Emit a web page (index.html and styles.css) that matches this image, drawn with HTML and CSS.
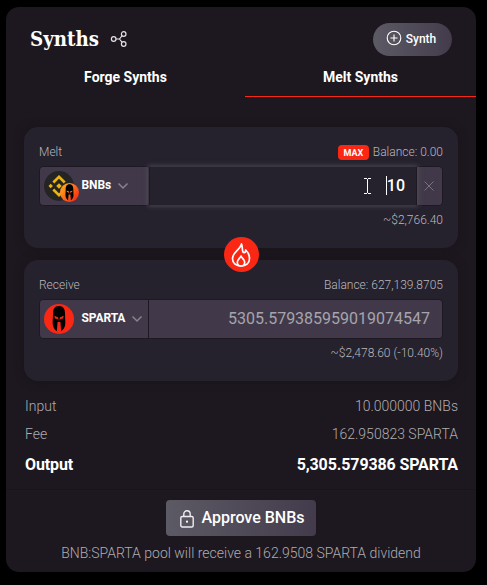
FILE: index.html
```html
<!DOCTYPE html>
<html lang="en">
<head>
<meta charset="utf-8">
<title>Synths</title>
<link rel="stylesheet" href="styles.css">
</head>
<body>
<svg class="defs" width="0" height="0">
  <defs>
    <linearGradient id="flame" x1="0" y1="0" x2="1" y2="1"><stop offset="0.15" stop-color="#ffa21c"/><stop offset="0.9" stop-color="#fb2715"/></linearGradient>
    <symbol id="helmet" viewBox="0 0 30 30">
      <path fill-rule="evenodd" d="M15 2C10.400 2 9 5.500 9 9.500c0 4.500-.6 8-.2 11.500.4 2.600 2 4.700 4 6.200L13.600 18h2.800l.8 9.200c2-1.500 3.600-3.600 4-6.200.4-3.500-.2-7-.2-11.500C21 5.500 19.600 2 15 2zM10.300 11.800l4 1.700v3.500l-.8-1.900-2.500-.7zM19.700 11.800l-4 1.700v3.500l.8-1.900 2.500-.7z" fill="#000"/>
    </symbol>
  </defs>
</svg>
<main class="card">
  <header class="head">
    <h1 class="title">Synths</h1>
    <svg class="share" width="18" height="18" viewBox="0 0 18 18"><g fill="none" stroke="#e4e3e6" stroke-width="1.200"><circle cx="3.700" cy="9" r="2.300"/><circle cx="13.700" cy="4" r="2.300"/><circle cx="13.700" cy="14" r="2.300"/><path d="M6 9h3.500l2.600-3.300M9.500 9l2.600 3.300"/></g></svg>
    <button class="synth"><svg width="16" height="16" viewBox="0 0 16 16"><g fill="none" stroke="#fff" stroke-width="1.100"><circle cx="8" cy="8" r="6.800"/><path d="M8 4.500v7M4.500 8h7"/></g></svg><span>Synth</span></button>
  </header>
  <nav class="tabs"><a class="tab">Forge Synths</a><a class="tab active">Melt Synths</a></nav>
  <div class="body">
    <section class="panel">
      <div class="row"><span>Melt</span><span class="balance"><b class="max">MAX</b>Balance: 0.00</span></div>
      <div class="field">
        <div class="asset">
          <div class="coin">
            <svg width="30" height="30" viewBox="0 0 30 30"><circle cx="15" cy="15" r="15" fill="#242425"/><g fill="none" stroke="#edb50b" stroke-width="2.600"><path d="M9.300 11.500L15 5.800l5.700 5.700M9.300 18.500l5.700 5.700 5.700-5.700"/></g><g fill="#edb50b"><path d="M15 12.200l2.800 2.800-2.800 2.800-2.800-2.800zM6.700 12.800l2.200 2.200-2.200 2.200L4.500 15zM23.300 12.800l2.200 2.200-2.200 2.200-2.200-2.200z"/></g></svg>
            <svg class="mini" width="19" height="19" viewBox="0 0 30 30"><circle cx="15" cy="15" r="15" fill="url(#flame)"/><use href="#helmet"/></svg>
          </div>
          <b>BNBs</b>
          <svg class="chev" width="12" height="8" viewBox="0 0 12 8"><path d="M1.500 1.500L6 6l4.500-4.500" fill="none" stroke="#87858c" stroke-width="1.500"/></svg>
        </div>
        <div class="amount focus">
          <svg class="ibeam" width="7" height="16" viewBox="0 0 7 16"><path d="M0 .5h3M4 .5h3M0 15.500h3M4 15.500h3M3.500 1v14" fill="none" stroke="#fff"/></svg>
          <i class="caret"></i><span>10</span>
        </div>
        <div class="clear"><svg width="10" height="10" viewBox="0 0 10 10"><path d="M.5.5l9 9M9.500.5l-9 9" fill="none" stroke="#77737f"/></svg></div>
      </div>
      <div class="usd">~$2,766.40</div>
    </section>
    <div class="burn"><svg width="20" height="26" viewBox="0 0 20 26"><g fill="none" stroke="#fff" stroke-width="1.700" stroke-linejoin="round"><path d="M10.500 2C9.500 7.500 1.500 10 1.500 16.500c0 4.800 3.700 7.500 8.500 7.500s8.500-2.700 8.500-7.500c0-3.400-1.500-6.300-3.800-8.500 0 1.800-.6 2.700-1.700 2.700-2.400 0-1-5-2.500-8.700z"/><path d="M10 14c-.8 2.200-3.700 3.500-3.700 6.300 0 2.400 1.600 3.700 3.700 3.700s3.700-1.300 3.700-3.700C13.700 17.500 10.800 16.200 10 14z"/></g></svg></div>
    <section class="panel">
      <div class="row"><span>Receive</span><span>Balance: 627,139.8705</span></div>
      <div class="field">
        <div class="asset">
          <div class="coin"><svg width="30" height="30" viewBox="0 0 30 30"><circle cx="15" cy="15" r="15" fill="#fb2715"/><use href="#helmet"/></svg></div>
          <b>SPARTA</b>
          <svg class="chev" width="12" height="8" viewBox="0 0 12 8"><path d="M1.500 1.500L6 6l4.500-4.500" fill="none" stroke="#87858c" stroke-width="1.500"/></svg>
        </div>
        <div class="amount readonly">5305.579385959019074547</div>
      </div>
      <div class="usd">~$2,478.60 (-10.40%)</div>
    </section>
    <dl class="summary">
      <div class="line"><dt>Input</dt><dd>10.000000 BNBs</dd></div>
      <div class="line"><dt>Fee</dt><dd>162.950823 SPARTA</dd></div>
      <div class="line total"><dt>Output</dt><dd>5,305.579386 SPARTA</dd></div>
    </dl>
  </div>
  <footer class="foot">
    <button class="approve"><svg width="14" height="18" viewBox="0 0 14 18"><g fill="none" stroke="#eeedf0" stroke-width="1.400"><rect x=".8" y="6.500" width="12.400" height="10.500" rx="1.500"/><path d="M3.800 6.500V4a3.200 3.200 0 0 1 6.400 0v2.500"/></g><circle cx="7" cy="11.700" r="1.100" fill="#fff"/></svg><span>Approve BNBs</span></button>
    <p class="note">BNB:SPARTA pool will receive a 162.9508 SPARTA dividend</p>
  </footer>
</main>
</body>
</html>
```

FILE: styles.css
```css
* { box-sizing: border-box; }
body { margin: 0; background: #000; color: #aeadb1; font-family: Roboto, "Liberation Sans", sans-serif; font-size: 12px; font-weight: 300; padding: 7px 11px 13px 6px; }
.defs { display: block; height: 0; }
.card { height: 565px; background: #1d171f; border-radius: 13px; }
.head { height: 53px; display: flex; align-items: center; padding: 11px 24px 0; }
.title { margin: 0; width: 69px; color: #fff; font: 700 21px/28px "DejaVu Serif Condensed", "DejaVu Serif", serif; font-stretch: condensed; transform: scaleX(.965); transform-origin: left; white-space: nowrap; }
.share { margin-left: 11px; }
.synth { margin-left: auto; width: 79px; height: 33px; border: 0; border-radius: 17px; background: linear-gradient(90deg, #5c5a64, #433b4c); color: #fff; font: 500 12px Roboto, sans-serif; display: flex; align-items: center; justify-content: center; gap: 4px; padding: 0 3px 0 0; }
.synth svg { margin-top: -3px; }
.tabs { display: flex; height: 37px; }
.tab { flex: 1; margin-left: 4px; text-align: center; color: #fff; font-size: 14px; font-weight: 700; line-height: 20px; padding-top: 7px; }
.tab + .tab { border-bottom: 1px solid #fb2715; }
.body { padding: 30px 18px 0; }
.panel { height: 121px; padding: 15px; border-radius: 14px; background: #25212d; box-shadow: 0 0 10px #19141a; }
.row { display: flex; justify-content: space-between; align-items: center; height: 20px; color: #b9b8bd; }
.balance { display: flex; align-items: center; }
.max { width: 31px; height: 15px; margin-right: 4px; border-radius: 4px; background: #fb2715; color: #fff; font-size: 9px; font-weight: 700; line-height: 16px; text-align: center; }
.field { display: flex; height: 40px; margin-top: 4px; border: 1px solid #1d1822; border-radius: 4px; background: #41394a; }
.asset { width: 109px; display: flex; align-items: center; padding-left: 4px; border-right: 1px solid #1d1822; color: #fff; }
.asset b { font-weight: 700; margin: -2px 6px 0 7.500px; letter-spacing: -.1px; }
.coin { position: relative; width: 30px; height: 30px; }
.coin svg { display: block; }
.coin .mini { position: absolute; left: 15.500px; top: 12px; }
.amount { flex: 1; display: flex; align-items: center; justify-content: flex-end; padding-right: 12px; font-size: 16px; }
.amount.focus { background: #25212d; color: #fff; font-weight: 500; box-shadow: 0 0 5px 1px #514d59; border: 1px solid #1d1822; border-width: 0 1px; padding: 0 11px 1px 0; }
.ibeam { margin: 1px 15px 0 0; }
.caret { width: 1px; height: 19px; background: #fff; }
.clear { width: 25px; display: grid; place-items: center; padding-right: 1px; }
.readonly { color: #a6a5ac; font-weight: 400; padding-bottom: 1px; }
.usd { text-align: right; line-height: 16px; margin-top: 6px; color: #b9b8bd; }
.burn { position: relative; width: 35px; height: 35px; margin: -11px auto -12px; border-radius: 50%; background: #fb2715; display: grid; place-items: center; }
.summary { margin: 11px 0 0; font-size: 14px; }
.line { display: flex; justify-content: space-between; height: 28px; line-height: 28px; padding-left: 1px; }
.line dd { margin: 0; }
.total { font-size: 16px; font-weight: 700; color: #fff; height: 41px; line-height: 34px; letter-spacing: -.12px; }
.foot { border-top: 1px solid #19141a; padding-top: 10px; }
.approve { margin: 0 auto; width: 150px; height: 36px; border: 0; border-radius: 4px; background: linear-gradient(90deg, #5c5a64, #433b4c); color: #fff; font: 500 16px Roboto, sans-serif; display: flex; align-items: center; justify-content: center; gap: 7px; padding: 0 0 1px 3px; }
.approve svg { margin-top: 2px; }
.note { margin: 7px 0 0; font-size: 14px; line-height: 20px; text-align: center; }
```
